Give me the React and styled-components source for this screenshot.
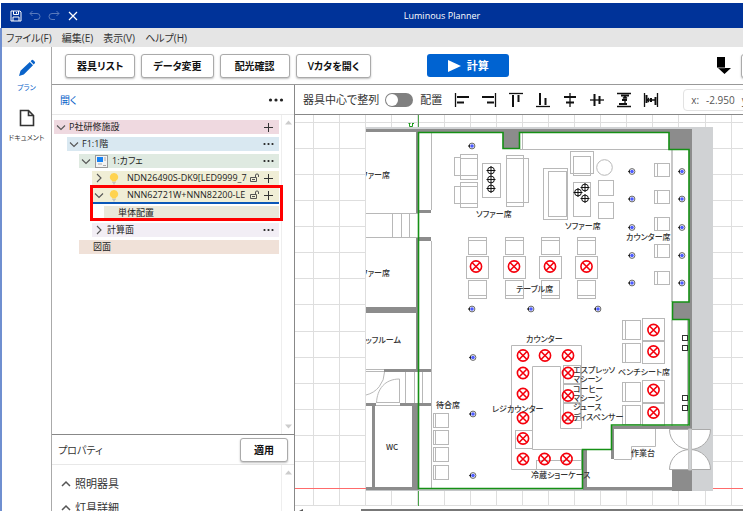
import React from 'react';
import styled, { createGlobalStyle } from 'styled-components';

const GlobalStyle = createGlobalStyle`
  * {
    box-sizing: border-box;
  }

  body {
    margin: 0;
    background: #fff;
    color: #333;
    font-family: "Open Sans", "Noto Sans CJK JP", sans-serif;
    font-size: 11px;
    line-height: 14px;
    font-feature-settings: "palt";
  }

  button {
    margin: 0;
    padding: 0;
    border: none;
    background: none;
    color: inherit;
    font: inherit;
    font-feature-settings: inherit;
    white-space: nowrap;
  }

  svg {
    display: block;
    flex: none;
  }
`;

const Window = styled.div`
  display: flex;
  flex-direction: column;
  height: 100vh;
  border: solid #fff;
  border-width: 3px 7px 3px 0;
  overflow: hidden;
`;

const TitleBar = styled.header`
  display: flex;
  flex: none;
  align-items: center;
  height: 25px;
  margin-left: 1px;
  background: #003399;
  color: #fff;
`;

const QuickActions = styled.div`
  display: flex;
  align-items: center;
  gap: 7px;
  width: 140px;
  padding-left: 9px;
`;

const Title = styled.h1`
  flex: 1;
  margin: 0;
  font-size: 9px;
  font-weight: 400;
  text-align: center;
`;

const Frame = styled.div`
  display: flex;
  flex: 1;
  flex-direction: column;
  min-height: 0;
  border-left: 2px solid #6f8fd0;
`;

const MenuBar = styled.nav`
  display: flex;
  flex: none;
  align-items: center;
  gap: 10px;
  height: 19px;
  padding-left: 4px;
  background: #e5e5e5;
  font-size: 10px;
`;

const Body = styled.div`
  display: flex;
  flex: 1;
  min-height: 0;
`;

const Rail = styled.nav`
  display: flex;
  flex: none;
  flex-direction: column;
  align-items: center;
  gap: 14px;
  width: 50px;
  padding-top: 12px;
  border-right: 1px solid #aaa;
`;

const RailButton = styled.button`
  display: flex;
  flex-direction: column;
  align-items: center;
  gap: 4px;
  color: ${(props) => (props.$active ? '#0a63c9' : '#333')};
  font-size: 7px;
`;

const Main = styled.main`
  display: flex;
  flex: 1;
  flex-direction: column;
  min-width: 0;
`;

const Toolbar = styled.div`
  display: flex;
  flex: none;
  align-items: center;
  gap: 6px;
  height: 38px;
  padding-left: 13px;
  border-bottom: 1px solid #999;
  overflow: hidden;
`;

const OutlineButton = styled.button`
  flex: none;
  min-width: ${(props) => props.$min || 70}px;
  height: 24px;
  padding: 0 11px;
  border: 1px solid #aaa;
  border-radius: 3px;
  background: #fff;
  box-shadow: 0 1px 2px rgba(0, 0, 0, 0.25);
  color: #111;
  font-size: 10px;
  font-weight: 600;
`;

const CalcButton = styled.button`
  display: flex;
  align-items: center;
  justify-content: center;
  gap: 6px;
  width: 82px;
  height: 23px;
  margin-left: 50px;
  border-radius: 3px;
  background: #0063d1;
  color: #fff;
  font-weight: 600;
`;

const ToolbarEnd = styled.div`
  display: flex;
  align-items: center;
  gap: 9px;
  margin-left: auto;
  margin-right: -42px;
`;

const Columns = styled.div`
  display: flex;
  flex: 1;
  min-height: 0;
`;

const SidePanel = styled.aside`
  display: flex;
  flex: none;
  flex-direction: column;
  width: 243px;
  border-right: 1px solid #888;
`;

const PanelHeader = styled.div`
  display: flex;
  flex: none;
  align-items: center;
  justify-content: space-between;
  height: 30px;
  padding: 0 ${(props) => props.$padEnd || 10}px 0 6px;
  border-bottom: 1px solid #e8e8e8;
`;

const OpenButton = styled.button`
  padding-left: 2px;
  color: #0a63c9;
  font-size: 10px;
`;

const ScrollArea = styled.div`
  display: flex;
  flex: ${(props) => (props.$grow ? '1' : '0 0 46px')};
  min-height: 0;
  border-bottom: ${(props) => (props.$grow ? '1px solid #888' : 'none')};
  overflow: hidden;
`;

const ScrollContent = styled.div`
  display: flex;
  flex: 1;
  flex-direction: column;
  min-width: 0;
`;

const ScrollTrack = styled.div`
  display: flex;
  flex: none;
  flex-direction: column;
  align-items: center;
  justify-content: space-between;
  width: 13px;
  padding: 5px 0;
  border-left: 1px solid #eee;
`;

const Tree = styled(ScrollContent)`
  gap: 3px;
  padding: 5px 2px 0;
  font-size: 9px;
`;

const TreeRow = styled.div`
  display: flex;
  flex: none;
  align-items: center;
  gap: 3px;
  height: ${(props) => (props.$selected ? 16 : 14)}px;
  margin-left: ${(props) => props.$indent}px;
  padding: 0 5px 0 ${(props) => (props.$leaf ? 14 : 2)}px;
  border-bottom: ${(props) => (props.$selected ? '2px solid #0a57b8' : 'none')};
  background: ${(props) => props.$color};
`;

const TreeLabel = styled.span`
  flex: 1;
  padding-left: ${(props) => (props.$fixture ? 3 : 0)}px;
  overflow: hidden;
  color: #222;
  white-space: nowrap;
`;

const MarkedRows = styled.div`
  position: relative;
  display: flex;
  flex: none;
  flex-direction: column;
  gap: 2px;
`;

const Marker = styled.div`
  position: absolute;
  inset: -3px -4px -1px 36px;
  border: 3px solid #f00;
`;

const PropertyTitle = styled.h2`
  margin: 0;
  font-size: 10px;
  font-weight: 400;
`;

const Sections = styled(ScrollContent)`
  gap: 10px;
  padding: 12px 0 0 9px;
`;

const SectionButton = styled.button`
  display: flex;
  align-items: center;
  gap: 4px;
`;

const Workspace = styled.section`
  display: flex;
  flex: 1;
  flex-direction: column;
  min-width: 0;
`;

const AlignBar = styled.div`
  display: flex;
  flex: none;
  align-items: center;
  gap: 7px;
  height: 30px;
  padding-left: 8px;
  border-bottom: 1px solid #888;
  overflow: hidden;
  white-space: nowrap;
`;

const SwitchLabel = styled.label`
  display: flex;
  align-items: center;
  gap: 6px;
`;

const Switch = styled.input`
  width: 28px;
  height: 14px;
  margin: 0;
  border-radius: 7px;
  background: #808080;
  appearance: none;

  &::before {
    display: block;
    width: 12px;
    height: 12px;
    margin: 1px;
    border-radius: 6px;
    background: #fff;
    content: '';
  }

  &:checked::before {
    margin-left: 15px;
  }
`;

const AlignTools = styled.div`
  display: flex;
  gap: 11px;
  padding: 0 17px 0 5px;
`;

const Coordinates = styled.div`
  display: flex;
  flex: none;
  align-items: center;
  gap: 7px;
  height: 22px;
  width: 120px;
  padding-left: 7px;
  border: 1px solid #e2e2e2;
  border-radius: 4px;
  color: #555;
  font-size: 10px;
`;

const Canvas = styled.div`
  flex: 1;
  min-height: 0;
  overflow: hidden;
`;

const HorizontalScroll = styled.div`
  display: flex;
  flex: none;
  height: 3px;
  align-items: flex-end;
  gap: 58px;
  padding-left: 4px;
`;

const ScrollThumb = styled.div`
  flex: 1;
  height: 2px;
  background: #777;
`;

const PlanText = styled.text`
  fill: #333;
  font-size: 8px;
  font-weight: 500;
  font-family: "Noto Sans CJK JP", sans-serif;
`;

/* icons */

const Stroke = ({ w = 12, h = 12, d, color = '#333', width = 1, opacity }) => (
  <svg width={w} height={h} viewBox={`0 0 ${w} ${h}`} fill="none" stroke={color} strokeWidth={width} opacity={opacity}>
    <path d={d} />
  </svg>
);

const Chevron = ({ dir }) => {
  const paths = {
    down: 'M1 3.5L5 7.5L9 3.5',
    right: 'M3 1L7 5L3 9',
    up: 'M1 7L5 3L9 7',
  };
  return <Stroke w={10} h={10} d={paths[dir]} color="#555" width={dir === 'up' ? 1.5 : 1.1} />;
};

const Dots = ({ big }) => (
  <svg width={big ? 16 : 11} height="4" viewBox={big ? '0 0 16 4' : '0 0 11 4'} fill="#222">
    <circle cx={big ? 2.5 : 1.5} cy="2" r={big ? 1.6 : 1.1} />
    <circle cx={big ? 8 : 5.5} cy="2" r={big ? 1.6 : 1.1} />
    <circle cx={big ? 13.5 : 9.5} cy="2" r={big ? 1.6 : 1.1} />
  </svg>
);

const Plus = () => <Stroke w={11} h={11} d="M5.5 1V10M1 5.5H10" />;

const Lock = () => (
  <svg width="10" height="10" viewBox="0 0 10 10" fill="none" stroke="#555">
    <path d="M.5 4.5H6.5V8.5H.5ZM5.5 4.5V2Q5.5 1 7 1Q8.5 1 8.5 2V4M2 6.5H5" />
  </svg>
);

const Bulb = () => (
  <svg width="14" height="13" viewBox="0 0 14 13">
    <path d="M7 1A4 4 0 0 1 9.4 8.3L8.8 9.4H5.2L4.6 8.3A4 4 0 0 1 7 1Z" fill="#ffd34f" />
    <path d="M5.3 10.3H8.7M6 11.8H8" stroke="#bbb" />
  </svg>
);

const RoomIcon = () => (
  <svg width="15" height="13" viewBox="0 0 15 13">
    <rect x="1.5" y=".5" width="12" height="12" fill="#f3f3f3" stroke="#999" />
    <rect x="3" y="2" width="6" height="5" fill="#1683f5" />
    <path d="M10 3H12M10 5H12M4 9H8M9 10.5H12" stroke="#aaa" />
  </svg>
);

const SaveIcon = () => (
  <svg width="12" height="12" viewBox="0 0 12 12" fill="none" stroke="#fff">
    <path d="M1 1H10L11 2V11H1ZM3.5 1V4.5H8.5V1M3 11V7H9V11M6.5 2V3.5" />
  </svg>
);

const PencilIcon = () => (
  <svg width="18" height="18" viewBox="0 0 18 18" fill="#0a63c9">
    <path d="M1 17L2.5 11.8L11.8 3L15 6.2L5.8 15.5ZM12.6 2.2L13.8 1Q14.6 .5 15.3 1.2L16.8 2.7Q17.4 3.4 16.8 4.2L15.7 5.4Z" />
  </svg>
);

const FileIcon = () => (
  <Stroke w={16} h={18} d="M1.5 1.5H9.5L14.5 6.5V16.5H1.5ZM9.5 1.5V6.5H14.5" width={1.6} />
);

const DownIcon = () => (
  <svg width="16" height="19" viewBox="0 0 16 19">
    <path d="M1 1H9V12H15L8.5 18L2 12H1Z" fill="#000" />
    <path d="M1 11.8H9" stroke="#fff" strokeWidth=".6" />
  </svg>
);

const ScrollArrow = ({ up }) => (
  <svg width="7" height="5" viewBox="0 0 7 5" fill="#ccc">
    <path d={up ? 'M0 4.5L3.5 .5L7 4.5Z' : 'M0 .5L3.5 4.5L7 .5Z'} />
  </svg>
);

/* thin: the guide lines, thick: the bars set against them */
const alignIcons = [
  { name: '左揃え', thin: 'M1.5 1V15', thick: 'M3 5H15M3 10.5H10' },
  { name: '右揃え', thin: 'M14.5 1V15', thick: 'M1 5H13M6 10.5H13' },
  { name: '上揃え', thin: 'M1 1.5H15', thick: 'M5 3V15M10.5 3V10' },
  { name: '下揃え', thin: 'M1 14.5H15', thick: 'M5 1V13M10.5 6V13' },
  { name: '左右中央', thin: 'M8 1V15', thick: 'M2 5H14M4 10.5H12' },
  { name: '上下中央', thin: 'M1 8H15', thick: 'M5.5 2V14M10.5 4V12' },
  { name: '縦等間隔', thin: 'M1 1.5H15M1 14.5H15M9 5V11M7 6.5L9 4.5L11 6.5', thick: 'M5 3.5H13M3 12H11M6 8H11' },
  { name: '横等間隔', thin: 'M1.5 1V15M14.5 1V15M4 8H12M6 6L4 8L6 10', thick: 'M3.5 3V11M12.5 5V13M8 6V10' },
];

const AlignIcon = ({ thin, thick }) => (
  <svg width="16" height="16" viewBox="0 0 16 16" fill="none" stroke="#111">
    <path d={thin} strokeWidth="1.3" />
    <path d={thick} strokeWidth="2" />
  </svg>
);

/* floor plan */

const gridX = Array.from({ length: 60 }, (_, i) => 314 + Math.round(26.1 * i));
const gridY = [123, 149, 175, 201, 227, 253, 279, 305, 332, 358, 384, 410, 436, 462, 506];

const walls = [
  [366, 129, 326, 3], [503, 132, 17, 17], [669, 129, 23, 21], [689, 129, 3, 362],
  [672, 302, 20, 18], [672, 470, 20, 21], [366, 487, 53, 3], [583, 487, 89, 3],
  [611, 426, 81, 3], [611, 426, 3, 33], [583, 449, 4, 40],
  [416, 131, 3, 82], [416, 238, 3, 132], [418, 210, 13, 3], [418, 237, 13, 4],
  [366, 307, 51, 6], [384, 369, 47, 3], [366, 403, 10, 3], [400, 403, 31, 3],
  [372, 405, 3, 84], [412, 405, 6, 84],
];

const furniture = [
  [460, 154, 17, 25], [460, 158, 17, 17], [454, 157, 6, 18],
  [460, 182, 17, 25], [460, 186, 17, 17], [454, 186, 6, 17],
  [482, 163, 18, 34],
  [506, 155, 17, 51], [506, 158, 17, 44], [523, 158, 5, 44],
  [543, 168, 24, 51], [548, 171, 18, 45],
  [570, 151, 23, 22], [573, 156, 17, 19], [573, 182, 17, 34],
  [598, 180, 15, 15], [598, 202, 15, 16],
  [563, 365, 17, 18], [563, 384, 17, 18], [563, 403, 17, 17],
  [515, 430, 17, 18], [536, 460, 45, 9],
];

const tables = [466, 503, 539, 575];
const counterSeats = [163, 190, 217, 244, 271];
const benchSeats = [[320, 318], [343, 341], [382, 380], [405, 403]];
const waitingSeats = [413, 430, 447, 465];

const lamps = [
  [476, 266.5], [514, 266.5], [550, 266.5], [586.5, 266.5],
  [523, 355.5], [545, 355.5], [568, 355.5], [523, 373], [568, 373],
  [523, 394], [568, 395.5], [523, 418], [568, 418], [523, 438.5],
  [523, 459], [544.5, 459], [566.5, 459],
  [653.5, 330], [653.5, 351.5], [653.5, 390], [653.5, 412.5],
];

const pendants = [[491, 170.5], [491, 179.5], [491, 188.5], [585, 187.5], [578, 192.5], [585, 198.5]];

const downlights = [
  [472, 146], [472, 309], [531, 309], [598, 309], [473, 357.5], [473, 414], [473, 475.5],
  ...[171.5, 199, 227.5, 255.5, 283].flatMap((y) => [[632, y], [682, y]]),
];

const labels = [
  [476, 217, 'ソファー席'], [565, 229, 'ソファー席'], [626, 240, 'カウンター席'],
  [516, 292, 'テーブル席'], [526, 342, 'カウンター'], [492, 412, 'レジカウンター'],
  [573, 373, 'エスプレッソ'], [573, 382, 'マシーン'], [573, 392, 'コーヒー'],
  [573, 401, 'マシーン'], [573, 410, 'ジュース'], [573, 420, 'ディスペンサー'],
  [618, 375, 'ベンチシート席'], [436, 408, '待合席'], [531, 478, '冷蔵ショーケース'],
  [631, 456, '作業台'], [386, 450, 'WC'],
];

const Box = ({ r, ...rest }) => <rect x={r[0] + 0.5} y={r[1] + 0.5} width={r[2]} height={r[3]} {...rest} />;

const FloorPlan = () => (
  <svg width="100%" height="100%">
    <defs>
      <clipPath id="sheet">
        <rect x="366" y="127" width="347" height="364" />
      </clipPath>
    </defs>
    <g transform="translate(-295 -115)">
      <g stroke="#dedede">
        {gridX.map((x) => <path key={x} d={`M${x - 0.5} 115V506`} />)}
        {gridY.map((y) => <path key={y} d={`M295 ${y - 0.5}H2000`} />)}
      </g>
      <path d="M295 488.5H2000" stroke="#ff6b6b" />
      <path d="M418.5 115V506" stroke="#4aa34a" />
      <path d="M408.5 123.5H410.5M412 123.5H414M409.5 124V126.5H412.5V124" stroke="#1d9a1d" fill="none" />

      <rect x="366" y="127" width="347" height="364" fill="#fff" />
      <rect x="366" y="127" width="347" height="2" fill="#d0d2d4" />
      <rect x="366" y="489" width="347" height="2" fill="#c4c6c8" />
      <rect x="692" y="127" width="21" height="364" fill="#d0d2d4" />
      <g fill="#8c8c8c">
        {walls.map((w, i) => <rect key={i} x={w[0]} y={w[1]} width={w[2]} height={w[3]} />)}
      </g>

      <g fill="none" stroke="#b8b8b8">
        <path d="M431.5 133V210M431.5 241V489M366 213.5H418M366 237.5H418M392.5 213V238M401.5 213V238M409.5 213V238" />
        <path d="M405.5 372V403M414.5 372V403M422.5 372V403M366 369.5H384M366 371.5H384M376 402.5H400M376 405.5H400" />
        <path d="M384.5 372A24 24 0 0 1 366 395M376.5 403C377 389 385 379 399.5 379V403" />
        <path d="M522.5 133V149M520 149.5H669" />
        <path d="M672 150V302M672 320V426" stroke="#c8c8c8" strokeWidth="2" />
        <path d="M687.5 320V426" />
        <path d="M511.5 345.5H581.5V428.5H560.5V366.5H532.5V449.5H583M511.5 345.5V469.5H581.5V449.5" />
        <path d="M614 459.5H631.5V446.5H655.5V429" />
        {furniture.map((r, i) => <Box key={i} r={r} />)}
        <circle cx="604.5" cy="167.5" r="7.8" />
        {tables.map((x) => (
          <g key={x}>
            <Box r={[x + 2, 237, 18, 17]} />
            <Box r={[x + 2, 237, 18, 3]} />
            <Box r={[x, 256, 22, 22]} />
            <Box r={[x + 2, 280, 18, 18]} />
            <Box r={[x + 2, 295, 18, 3]} />
          </g>
        ))}
        {counterSeats.map((y) => (
          <g key={y}>
            <Box r={[654, y, 15, 13]} />
            <Box r={[654, y, 3, 13]} />
          </g>
        ))}
        {benchSeats.map(([seat, table]) => (
          <g key={seat}>
            <Box r={[622, seat, 18, 19]} />
            <Box r={[622, seat, 3, 19]} />
            <Box r={[642, table, 22, 22]} />
          </g>
        ))}
        {waitingSeats.map((y) => (
          <g key={y}>
            <Box r={[433, y, 15, 14]} />
            <Box r={[433, y, 2, 14]} />
          </g>
        ))}
      </g>

      <g fill="#fff" stroke="#aaa">
        <path d="M669.5 429.5H710.5A20.5 20 0 0 1 690 449.5A20.5 20 0 0 1 669.5 429.5Z" />
        <path d="M669.5 469.5H710.5A20.5 20 0 0 0 690 449.5A20.5 20 0 0 0 669.5 469.5Z" />
        <path d="M688.5 429V470H691.5V429Z" fill="#d0d2d4" stroke="#c4c4c4" />
      </g>

      <g fill="#fff" stroke="#333">
        {[335, 345, 395, 405].map((y) => <Box key={y} r={[682, y, 5, 5]} />)}
      </g>

      <path
        d="M418.5 132.5H503V148.5H519.5V132.5H669V149.5H689V302H672.5V319.5H689V425H611.5V449.5H582.5V488.5H418.5Z"
        fill="none"
        stroke="#159015"
        strokeWidth="1.6"
      />

      {labels.map(([x, y, text], i) => <PlanText key={i} x={x} y={y}>{text}</PlanText>)}
      <g clipPath="url(#sheet)">
        <PlanText x="390" y="178" textAnchor="end">ファー席</PlanText>
        <PlanText x="390" y="276" textAnchor="end">ファー席</PlanText>
        <PlanText x="401" y="343" textAnchor="end">ッフルーム</PlanText>
      </g>

      {pendants.map(([x, y], i) => (
        <g key={i} transform={`translate(${x} ${y})`} fill="none" stroke="#111">
          <circle r="3.4" />
          <path d="M-4.5 0H4.5M0 -4.5V4.5" />
        </g>
      ))}
      {downlights.map(([x, y], i) => (
        <g key={i} transform={`translate(${x} ${y})`}>
          <circle r="2.9" fill="#fff" stroke="#555" strokeWidth=".9" />
          <path d="M-4.2 0L-2 -1.5V1.5Z" fill="#222" />
          <circle r="1.8" fill="#4d5cff" />
        </g>
      ))}
      {lamps.map(([x, y], i) => (
        <g key={i} transform={`translate(${x} ${y})`} fill="none" stroke="#f5000c" strokeWidth="1.6">
          <circle r="5.6" />
          <path d="M-4 -4L4 4M-4 4L4 -4" />
        </g>
      ))}
    </g>
  </svg>
);

const FixtureRow = ({ open, selected, name }) => (
  <TreeRow $indent={38} $color="#f0eed6" $selected={selected}>
    <Chevron dir={open ? 'down' : 'right'} />
    <Bulb />
    <TreeLabel $fixture>{name}</TreeLabel>
    <Lock />
    <Plus />
  </TreeRow>
);

const App = () => (
  <Window>
    <GlobalStyle />
    <TitleBar>
      <QuickActions>
        <button type="button" aria-label="保存"><SaveIcon /></button>
        <button type="button" aria-label="元に戻す">
          <Stroke d="M3.5 1L1 3.5L3.5 6M1 3.5H8Q11 3.5 11 6.5Q11 9.5 8 9.5H5" color="#fff" opacity={0.35} />
        </button>
        <button type="button" aria-label="やり直し">
          <Stroke d="M8.5 1L11 3.5L8.5 6M11 3.5H4Q1 3.5 1 6.5Q1 9.5 4 9.5H7" color="#fff" opacity={0.35} />
        </button>
        <button type="button" aria-label="閉じる">
          <Stroke d="M2 2L10 10M2 10L10 2" color="#fff" width={1.2} />
        </button>
      </QuickActions>
      <Title>Luminous Planner</Title>
    </TitleBar>

    <Frame>
      <MenuBar>
        <button type="button">ファイル(F)</button>
        <button type="button">編集(E)</button>
        <button type="button">表示(V)</button>
        <button type="button">ヘルプ(H)</button>
      </MenuBar>

      <Body>
        <Rail>
          <RailButton type="button" $active><PencilIcon />プラン</RailButton>
          <RailButton type="button"><FileIcon />ドキュメント</RailButton>
        </Rail>

        <Main>
          <Toolbar>
            <OutlineButton type="button">器具リスト</OutlineButton>
            <OutlineButton type="button">データ変更</OutlineButton>
            <OutlineButton type="button">配光確認</OutlineButton>
            <OutlineButton type="button">Vカタを開く</OutlineButton>
            <CalcButton type="button">
              <svg width="13" height="12" viewBox="0 0 13 12" fill="#fff"><path d="M0 0L13 6L0 12Z" /></svg>
              計算
            </CalcButton>
            <ToolbarEnd>
              <button type="button" aria-label="ダウンロード"><DownIcon /></button>
              <OutlineButton type="button" aria-label="設定" $min={44}>
                <Stroke w={20} d="M4 6H16" />
              </OutlineButton>
            </ToolbarEnd>
          </Toolbar>

          <Columns>
            <SidePanel>
              <PanelHeader>
                <OpenButton type="button">開く</OpenButton>
                <button type="button" aria-label="メニュー"><Dots big /></button>
              </PanelHeader>
              <ScrollArea $grow>
                <Tree>
                  <TreeRow $indent={0} $color="#efd9e0">
                    <Chevron dir="down" />
                    <TreeLabel>P社研修施設</TreeLabel>
                    <Plus />
                  </TreeRow>
                  <TreeRow $indent={13} $color="#d9e8f1">
                    <Chevron dir="down" />
                    <TreeLabel>F1:1階</TreeLabel>
                    <Dots />
                  </TreeRow>
                  <TreeRow $indent={25} $color="#dfeae1">
                    <Chevron dir="down" />
                    <RoomIcon />
                    <TreeLabel>1:カフェ</TreeLabel>
                    <Dots />
                  </TreeRow>
                  <FixtureRow name="NDN26490S-DK9[LED9999_7(" />
                  <MarkedRows>
                    <FixtureRow open selected name="NNN62721W+NNN82200-LE" />
                    <TreeRow $indent={50} $color="#eae8da" $leaf>
                      <TreeLabel>単体配置</TreeLabel>
                    </TreeRow>
                    <Marker />
                  </MarkedRows>
                  <TreeRow $indent={38} $color="#f2eef5">
                    <Chevron dir="right" />
                    <TreeLabel>計算面</TreeLabel>
                    <Dots />
                  </TreeRow>
                  <TreeRow $indent={25} $color="#f0e1d8" $leaf>
                    <TreeLabel>図面</TreeLabel>
                  </TreeRow>
                </Tree>
                <ScrollTrack>
                  <ScrollArrow up />
                  <ScrollArrow />
                </ScrollTrack>
              </ScrollArea>
              <PanelHeader $padEnd={6}>
                <PropertyTitle>プロパティ</PropertyTitle>
                <OutlineButton type="button" $min={48}>適用</OutlineButton>
              </PanelHeader>
              <ScrollArea>
                <Sections>
                  <SectionButton type="button"><Chevron dir="up" />照明器具</SectionButton>
                  <SectionButton type="button"><Chevron dir="up" />灯具詳細</SectionButton>
                </Sections>
                <ScrollTrack>
                  <ScrollArrow up />
                </ScrollTrack>
              </ScrollArea>
            </SidePanel>

            <Workspace>
              <AlignBar>
                <SwitchLabel>
                  器具中心で整列
                  <Switch type="checkbox" role="switch" />
                </SwitchLabel>
                <span>配置</span>
                <AlignTools>
                  {alignIcons.map((icon) => (
                    <button type="button" key={icon.name} aria-label={icon.name}>
                      <AlignIcon thin={icon.thin} thick={icon.thick} />
                    </button>
                  ))}
                </AlignTools>
                <Coordinates>
                  <span>x:</span>
                  <span>-2.950</span>
                  <span>y:</span>
                </Coordinates>
              </AlignBar>
              <Canvas>
                <FloorPlan />
              </Canvas>
              <HorizontalScroll>
                <svg width="4" height="2" viewBox="0 0 4 2" fill="#555"><path d="M4 0V2H0Z" /></svg>
                <ScrollThumb />
              </HorizontalScroll>
            </Workspace>
          </Columns>
        </Main>
      </Body>
    </Frame>
  </Window>
);

export default App;
